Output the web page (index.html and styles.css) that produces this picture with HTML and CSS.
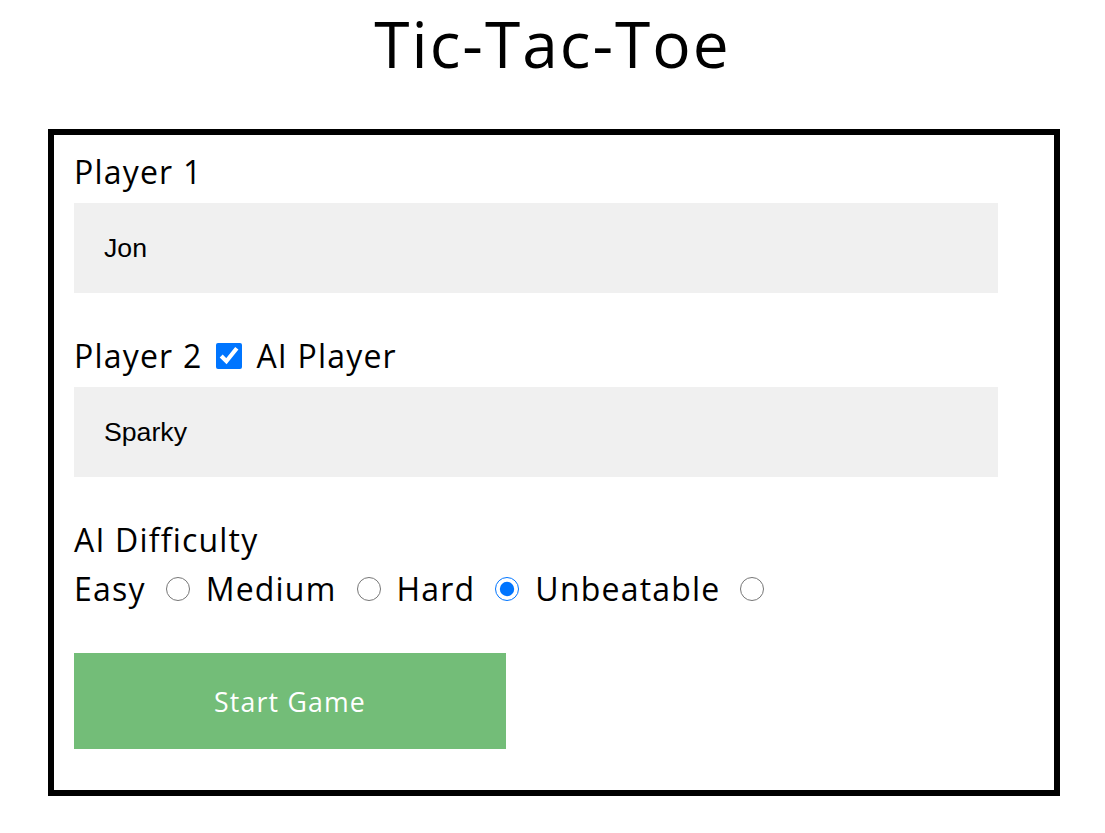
FILE: index.html
```html
<!DOCTYPE html>
<html lang="en">
<head>
<meta charset="utf-8">
<title>Tic-Tac-Toe</title>
<link rel="stylesheet" href="styles.css">
</head>
<body>
<h1 class="title">Tic-Tac-Toe</h1>
<form class="setup">
  <div class="field">
    <label class="label" for="p1">Player 1</label>
    <input class="name-input" id="p1" type="text" value="Jon">
  </div>
  <div class="field">
    <div class="label label-row">
      <label for="p2">Player 2</label>
      <input class="checkbox" id="ai" type="checkbox" checked>
      <label for="ai">AI Player</label>
    </div>
    <input class="name-input" id="p2" type="text" value="Sparky">
  </div>
  <div class="field field-last">
    <div class="label">AI Difficulty</div>
    <div class="radio-row">
      <label for="d1">Easy</label><input class="radio" type="radio" name="diff" id="d1">
      <label for="d2">Medium</label><input class="radio" type="radio" name="diff" id="d2">
      <label for="d3">Hard</label><input class="radio" type="radio" name="diff" id="d3" checked>
      <label for="d4">Unbeatable</label><input class="radio" type="radio" name="diff" id="d4">
    </div>
  </div>
  <button class="start" type="button">Start Game</button>
</form>
</body>
</html>
```
FILE: styles.css
```css
html, body {
  margin: 0;
  padding: 0;
  background: #fff;
}

body {
  font-family: "Open Sans", "DejaVu Sans", sans-serif;
  color: #000;
}

.title {
  margin: 0;
  font-size: 64px;
  line-height: 88px;
  font-weight: 400;
  letter-spacing: 2px;
  text-align: center;
}

.setup {
  box-sizing: border-box;
  width: 1012px;
  margin: 41px 0 0 48px;
  border: 6px solid #000;
  padding: 15px 20px 41px;
  display: flex;
  flex-direction: column;
  align-items: flex-start;
}

.field {
  display: flex;
  flex-direction: column;
  align-items: flex-start;
  margin-bottom: 41px;
}

.field-last {
  margin-bottom: 42px;
}

.label {
  font-size: 32px;
  line-height: 44px;
  letter-spacing: 1.2px;
  margin-bottom: 9px;
}

.label-row {
  display: flex;
  align-items: center;
}

.checkbox {
  width: 26px;
  height: 26px;
  margin: 0 14px 0 14px;
}

.name-input {
  box-sizing: border-box;
  width: 924px;
  height: 90px;
  border: none;
  outline: none;
  background: #f0f0f0;
  padding: 0 30px;
  font-family: "Liberation Sans", Arial, sans-serif;
  font-size: 26.67px;
  color: #000;
}

.radio-row {
  display: flex;
  align-items: center;
  font-size: 32px;
  line-height: 44px;
  letter-spacing: 1.2px;
  margin-top: -4px;
}

.radio {
  width: 24px;
  height: 24px;
  margin: 0 16px 0 20px;
}

.start {
  width: 432px;
  height: 96px;
  border: none;
  background: #73bd78;
  color: #fff;
  font-family: "Open Sans", "DejaVu Sans", sans-serif;
  font-size: 26.67px;
  letter-spacing: 1.2px;
}
```
